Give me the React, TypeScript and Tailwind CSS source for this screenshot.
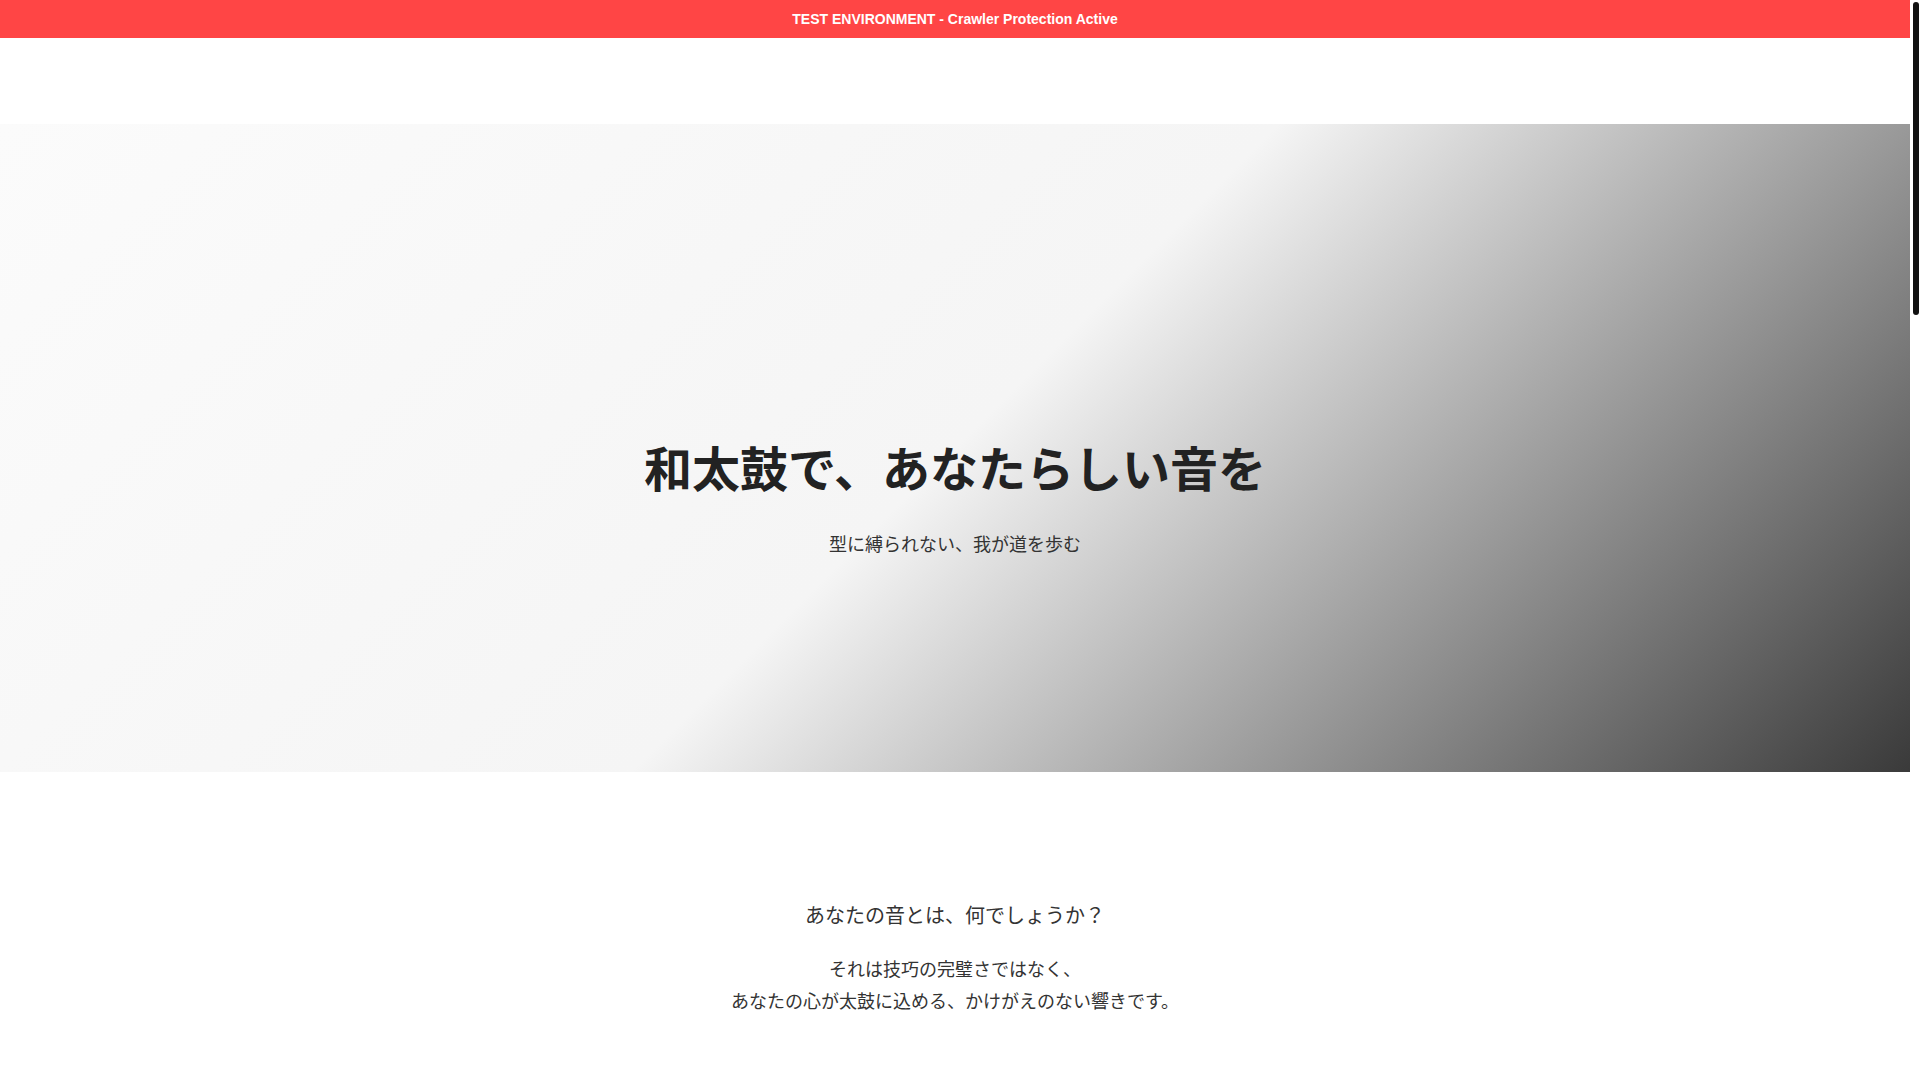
export default function App() {
  const jp = "font-['Noto_Sans_CJK_JP','Noto_Sans',sans-serif]";

  return (
    <div className={`relative min-h-[3700px] bg-white pr-[10px] ${jp}`}>
      {/* test banner */}
      <div className="flex h-[38px] items-center justify-center bg-[#ff4545] font-['Liberation_Sans',Arial,sans-serif] text-[14px] font-bold text-white">
        TEST ENVIRONMENT - Crawler Protection Active
      </div>

      {/* header (empty on this page) */}
      <header className="h-[86px] bg-white" />

      {/* hero */}
      <section className="flex h-[60vh] flex-col items-center justify-center bg-[linear-gradient(135deg,#fbfbfb_0%,#f5f5f5_50%,#3a3a3a_100%)] pt-[100px] text-center">
        <h1 className="text-[48px] font-bold leading-[1.2] text-[#222]">和太鼓で、あなたらしい音を</h1>
        <p className="mt-[33px] text-[18px] leading-[1.6] text-[#333]">型に縛られない、我が道を歩む</p>
      </section>

      {/* intro */}
      <section className="px-6 pt-[127px] pb-32 text-center text-[#333]">
        <h2 className="text-[20px] leading-[1.6]">あなたの音とは、何でしょうか？</h2>
        <p className="mt-[22px] text-[18px] leading-[1.75]">
          それは技巧の完璧さではなく、
          <br />
          あなたの心が太鼓に込める、かけがえのない響きです。
        </p>
      </section>

      {/* page scrollbar */}
      <div className="fixed top-0 right-0 h-screen w-[10px] bg-white">
        <div className="mt-[2px] ml-[3px] h-[313px] w-[6px] rounded-full bg-[#111]" />
      </div>
    </div>
  );
}
